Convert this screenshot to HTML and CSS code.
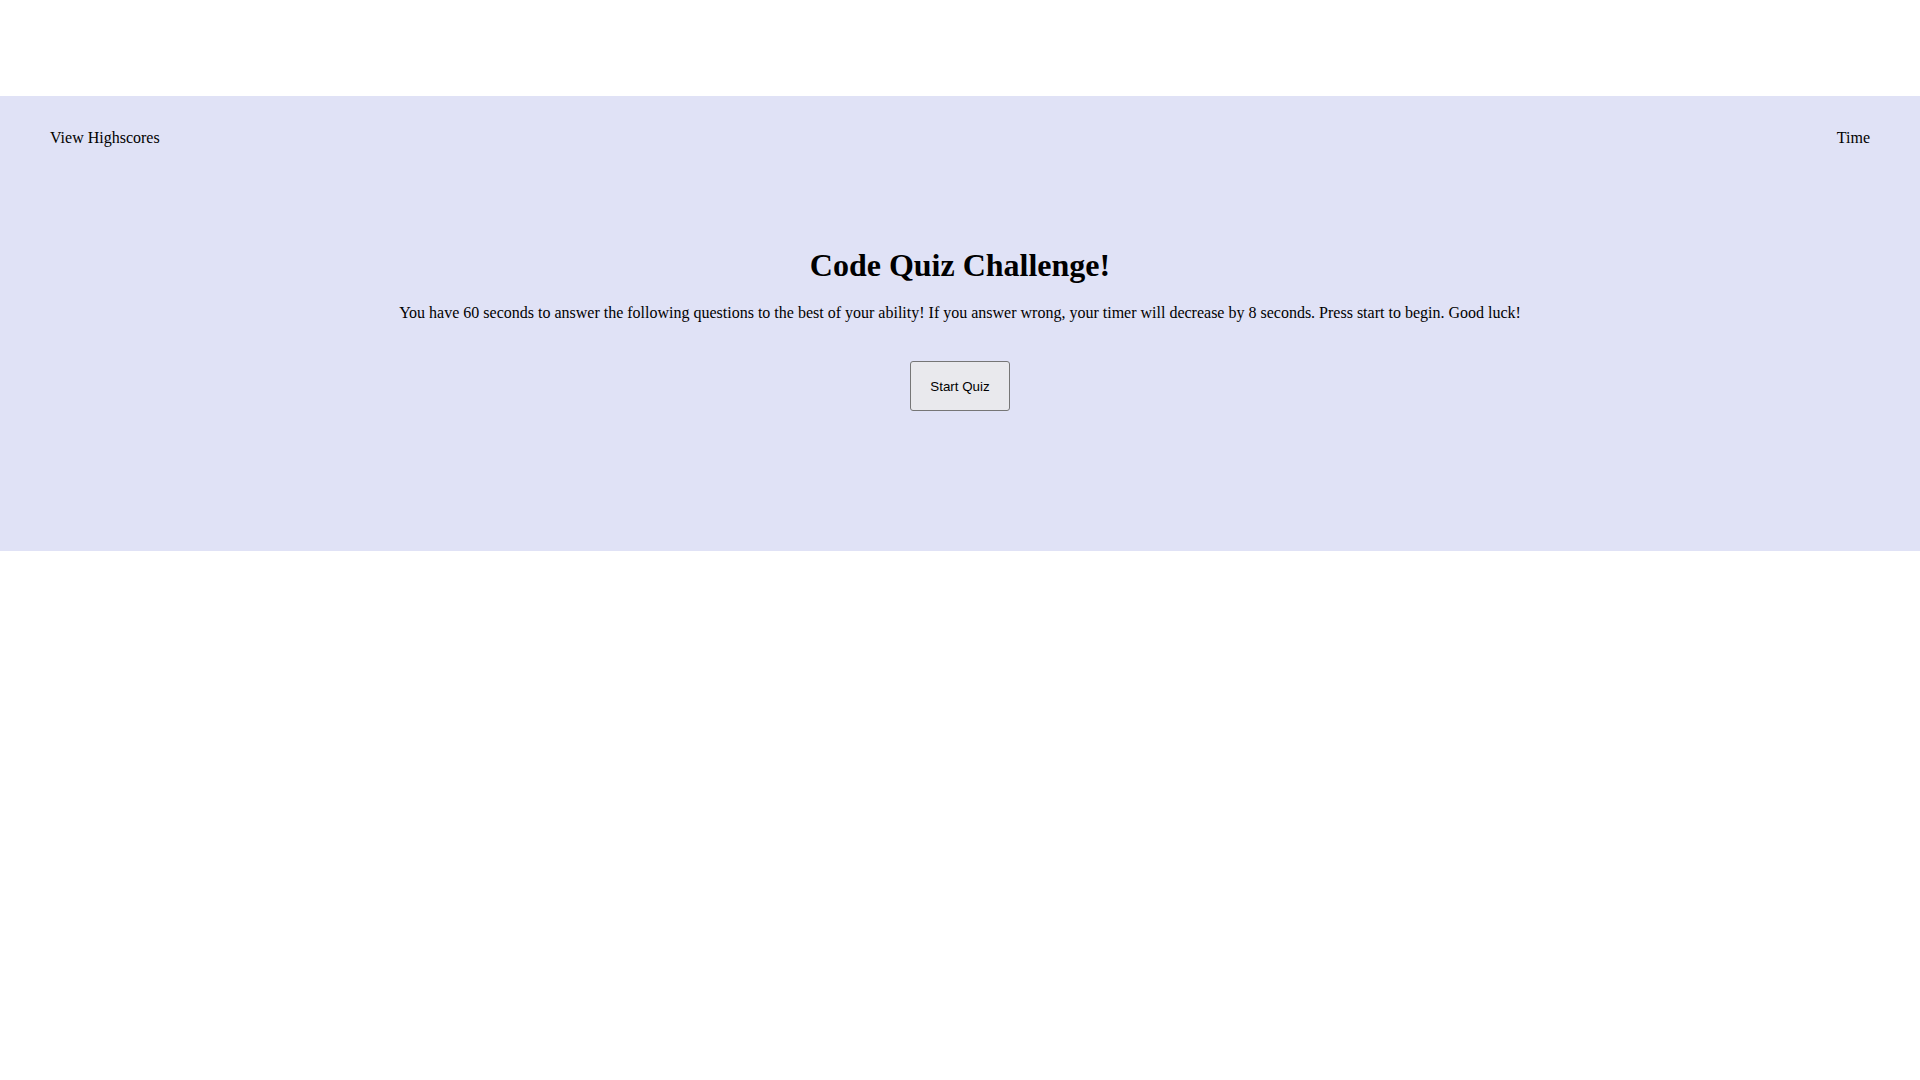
FILE: index.html
```html
<!DOCTYPE html>
<html lang="en">
<head>
<meta charset="utf-8">
<title>Code Quiz</title>
<link rel="stylesheet" href="styles.css">
</head>
<body>
  <div class="band">
    <header class="top">
      <a class="link">View Highscores</a>
      <span class="time">Time</span>
    </header>
    <main class="intro">
      <h1 class="title">Code Quiz Challenge!</h1>
      <p class="desc">You have 60 seconds to answer the following questions to the best of your ability! If you answer wrong, your timer will decrease by 8 seconds. Press start to begin. Good luck!</p>
      <button class="start">Start Quiz</button>
    </main>
  </div>
</body>
</html>
```
FILE: styles.css
```css
html, body {
  margin: 0;
  padding: 0;
  background: #ffffff;
  font-family: "Liberation Serif", "Times New Roman", serif;
  color: #000;
}
.band {
  margin-top: 96px;
  height: 455px;
  background: #e0e2f6;
  display: flex;
  flex-direction: column;
}
.top {
  display: flex;
  justify-content: space-between;
  padding: 33px 50px 0 50px;
  font-size: 16px;
  line-height: 18px;
}
.link {
  color: #000;
  text-decoration: none;
}
.intro {
  display: flex;
  flex-direction: column;
  align-items: center;
  text-align: center;
  padding-top: 100px;
}
.title {
  margin: 0;
  font-size: 32px;
  line-height: 37px;
  font-weight: bold;
}
.desc {
  margin: 20px 0 0;
  font-size: 16px;
  line-height: 18px;
}
.start {
  margin-top: 39px;
  width: 100px;
  height: 50px;
  padding: 0;
  font-family: "Liberation Sans", Arial, sans-serif;
  font-size: 13.33px;
  color: #000;
  background: #e9e9ed;
  border: 1px solid #767676;
  border-radius: 3px;
}
```
